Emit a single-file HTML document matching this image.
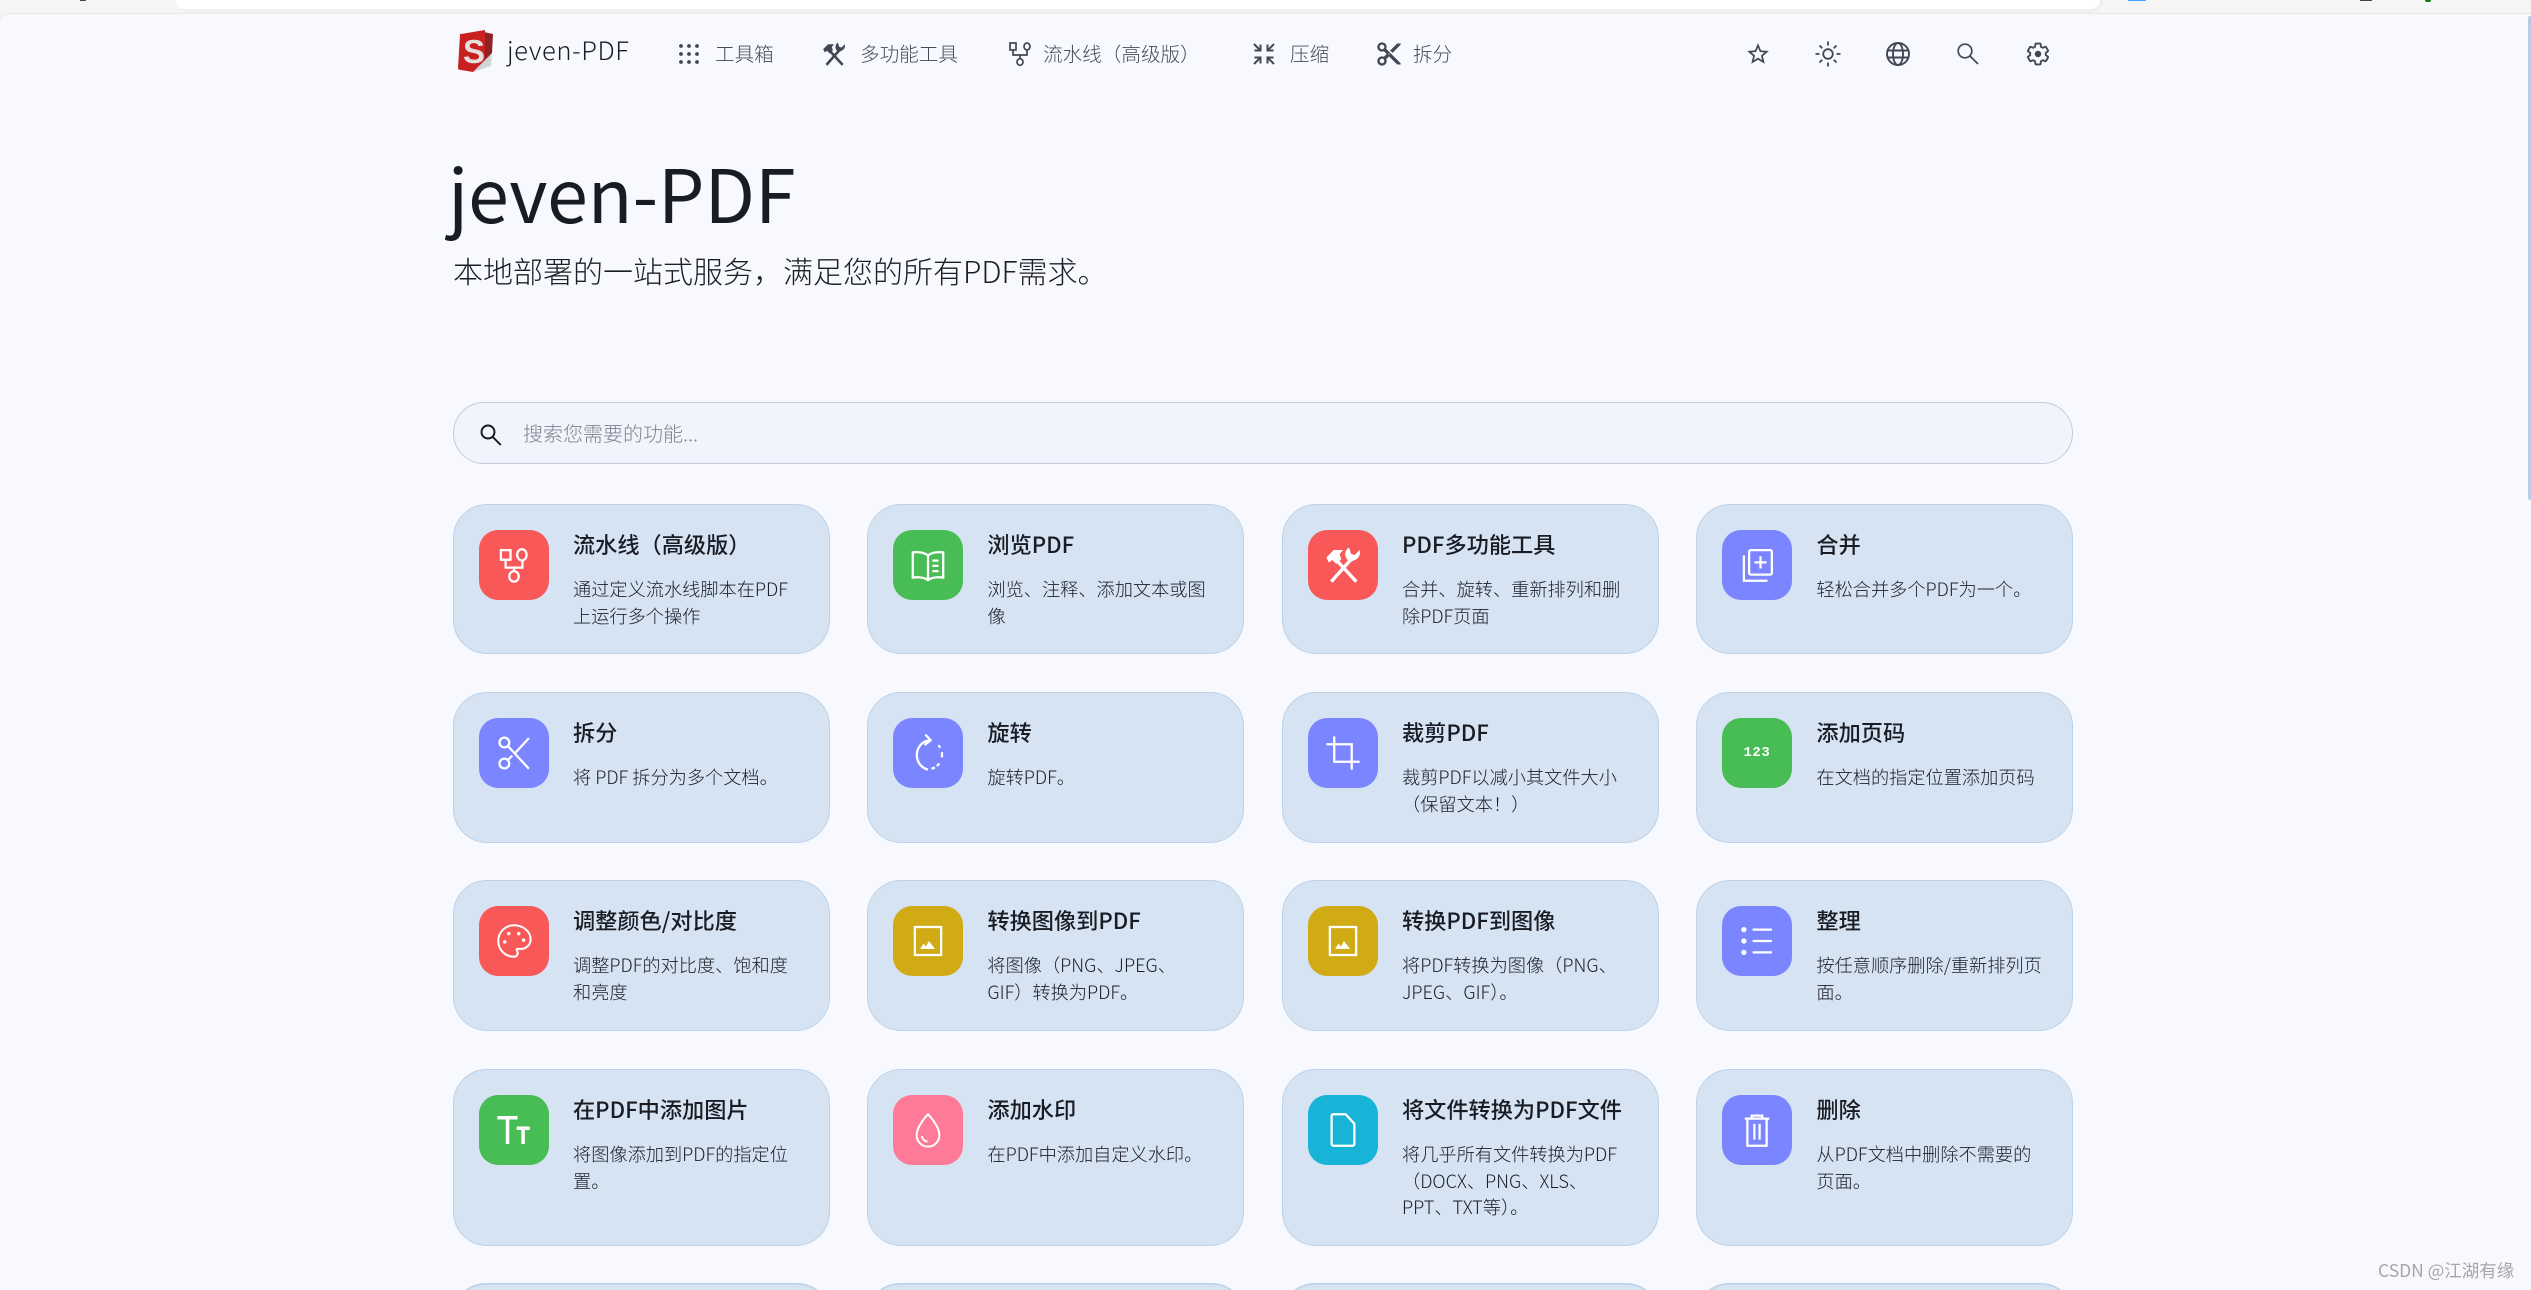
<!DOCTYPE html>
<html lang="zh-CN"><head><meta charset="utf-8"><title>jeven-PDF</title>
<style>
html,body{margin:0;padding:0;width:2531px;height:1290px;overflow:hidden;background:#f5f5f5}
body{position:relative;font-family:"Noto Sans CJK SC","Liberation Sans",sans-serif;color:#1a1c23}
#page{position:absolute;left:0;top:14px;width:2531px;height:1276px;background:#f8f9ff;border-top-left-radius:10px;box-shadow:0 -1px 1px #e6e6e6}
.abs{position:absolute}
.nt{position:absolute;top:38px;font-size:19.6px;line-height:30px;color:#454b57;white-space:nowrap;font-weight:300}
.ni{position:absolute;top:41px;width:26px;height:26px;fill:#414755;stroke:none}
.ns{fill:none;stroke:#414755;stroke-width:1.7}
.c{position:absolute;width:377px;box-sizing:border-box;background:#d5e3f3;border:1.5px solid #bdd2e8;border-radius:34px}
.i{position:absolute;left:24.5px;top:24.5px;width:70px;height:70px;border-radius:19px;display:flex;align-items:center;justify-content:center}
.i svg{width:42px;height:42px;fill:none;stroke:#fff;stroke-width:1.3}
.r{background:#f95858}.g{background:#49bd55}.b{background:#7b85ff}.y{background:#d1ab16}.p{background:#ff7a96}.k{background:#18b4d8}
.t{position:absolute;left:119px;top:23.5px;font-size:22.2px;line-height:30px;font-weight:500;white-space:nowrap;color:#1a1c23}
.d{position:absolute;left:119px;top:71px;font-size:18.2px;line-height:26.5px;white-space:nowrap;color:#1c1e25;font-weight:300}
</style></head><body>
<div class="abs" style="left:176px;top:0;width:1927px;height:12px;background:#efefef;border-radius:0 0 16px 16px"></div>
<div class="abs" style="left:175px;top:0;width:1925px;height:9px;background:#fff;border-radius:0 0 14px 14px"></div>
<div class="abs" style="left:80px;top:0;width:6px;height:1px;background:#444"></div>
<div class="abs" style="left:2128px;top:0;width:18px;height:1px;background:#3ea6ff"></div>
<div class="abs" style="left:2360px;top:0;width:12px;height:1px;background:#444"></div>
<div class="abs" style="left:2425px;top:0;width:6px;height:2px;background:#0a7d12;border-radius:0 0 3px 3px"></div>
<div id="page"></div>
<div class="abs" style="left:2528px;top:16px;width:3px;height:484px;background:#b8cde4;border-radius:2px 0 0 2px"></div>

<svg class="abs" style="left:458px;top:29px" width="36" height="44" viewBox="0 0 36 44">
<polygon points="26,3 35,5 34,24 26,33" fill="#8f2222"/>
<polygon points="15,43 34,24 33,37" fill="#cfd6d8"/>
<path d="M2 6 Q1 5 3 5 L27 1 V31 L15 43 L3 41 Q0 41 0 39 Z" fill="#c9211f"/>
<text x="5" y="34" font-family="Liberation Sans,sans-serif" font-weight="700" font-size="33" fill="#e6dfe0">S</text>
</svg>
<div class="abs" style="left:507px;top:29.5px;font-size:25.6px;line-height:40px;color:#1a1c23;white-space:nowrap;font-weight:300;letter-spacing:.6px">jeven-PDF</div>

<svg class="ni" style="left:676px" viewBox="0 0 26 26"><circle cx="5" cy="5" r="1.9"/><circle cx="13" cy="5" r="1.9"/><circle cx="21" cy="5" r="1.9"/><circle cx="5" cy="13" r="1.9"/><circle cx="13" cy="13" r="1.9"/><circle cx="21" cy="13" r="1.9"/><circle cx="5" cy="21" r="1.9"/><circle cx="13" cy="21" r="1.9"/><circle cx="21" cy="21" r="1.9"/></svg>
<div class="nt" style="left:715px">工具箱</div>
<svg class="ni" style="left:821px" viewBox="0 0 24 24"><path d="M8 9L20 22M16.500 9L5 22" style="stroke:#414755;stroke-width:2.400;fill:none"/><path d="M2 7.500L6.500 3H12L10 5.500 11 8.500 8 11.500 5.500 9 3.500 10.500z"/><path d="M15.500 1.500a4.800 4.800 0 0 0-1.500 6.500L16 10.500 19 9a4.800 4.800 0 0 0 3-6l-3 3-2.200-.6-.6-2.200z"/></svg>
<div class="nt" style="left:860px">多功能工具</div>
<svg class="ni" style="left:1007px" viewBox="0 0 26 26"><g class="ns"><rect x="3" y="2" width="6" height="7"/><ellipse cx="20" cy="5.500" rx="3" ry="3.500"/><path d="M6 9v5h14V9M13 14v4"/><ellipse cx="13" cy="21" rx="3" ry="3.300"/></g></svg>
<div class="nt" style="left:1043px">流水线（高级版）</div>
<svg class="ni" style="left:1251px" viewBox="0 0 26 26"><g class="ns" style="stroke-width:2"><path d="M3 3l5.500 5.500M9.500 3.500V9.500H3.500M23 3l-5.500 5.500M16.500 3.500V9.500h6M3 23l5.500-5.500M9.500 22.500V16.500H3.500M23 23l-5.500-5.500M16.500 22.500V16.500h6"/></g></svg>
<div class="nt" style="left:1290px">压缩</div>
<svg class="ni" style="left:1375px;width:28px;height:28px;top:40px" viewBox="0 0 24 24"><path d="M9.640 7.640c.23-.5.36-1.050.36-1.640 0-2.210-1.790-4-4-4S2 3.790 2 6s1.790 4 4 4c.59 0 1.140-.13 1.640-.36L10 12l-2.360 2.360C7.140 14.130 6.590 14 6 14c-2.210 0-4 1.790-4 4s1.790 4 4 4 4-1.790 4-4c0-.59-.13-1.140-.36-1.640L12 14l7 7h3v-1L9.640 7.640zM6 8c-1.100 0-2-.89-2-2s.9-2 2-2 2 .89 2 2-.9 2-2 2zm0 12c-1.100 0-2-.89-2-2s.9-2 2-2 2 .89 2 2-.9 2-2 2zm6-7.500c-.28 0-.5-.22-.5-.5s.22-.5.5-.5.5.22.5.5-.22.5-.5.5zM19 3l-6 6 2 2 7-7V3z"/></svg>
<div class="nt" style="left:1413px">拆分</div>

<svg class="ni" style="left:1745px" viewBox="0 0 24 24"><path d="M22 9.240l-7.190-.62L12 2 9.190 8.630 2 9.240l5.460 4.730L5.820 21 12 17.270 18.180 21l-1.630-7.030L22 9.240zM12 15.400l-3.760 2.270 1-4.280-3.320-2.880 4.380-.38L12 6.100l1.710 4.040 4.380.38-3.320 2.880 1 4.280L12 15.400z"/></svg>
<svg class="ni" style="left:1815px" viewBox="0 0 26 26"><g class="ns" style="stroke-width:1.800"><circle cx="13" cy="13" r="4.800"/><path d="M13 .5v4M13 21.500v4M.5 13h4M21.500 13h4M4.500 4.500l2.800 2.800M18.700 18.700l2.800 2.800M21.500 4.500l-2.800 2.800M7.300 18.700l-2.800 2.800"/></g></svg>
<svg class="ni" style="left:1885px" viewBox="0 0 26 26"><g class="ns" style="stroke-width:1.900"><circle cx="13" cy="13" r="11"/><ellipse cx="13" cy="13" rx="5" ry="11"/><path d="M2.500 9.500h21M2.500 16.500h21"/></g></svg>
<svg class="ni" style="left:1954px" viewBox="0 0 26 26"><g class="ns"><circle cx="11" cy="10" r="6.800"/><path d="M16 15l8 8"/></g></svg>
<svg class="ni" style="left:2025px" viewBox="0 0 24 24"><path class="ns" d="M19.140 12.940c.04-.3.06-.61.06-.94 0-.32-.02-.64-.07-.94l2.030-1.580c.18-.14.23-.41.12-.61l-1.920-3.320c-.12-.22-.37-.29-.59-.22l-2.390.96c-.5-.38-1.030-.7-1.620-.94l-.36-2.540c-.04-.24-.24-.41-.48-.41h-3.840c-.24 0-.43.17-.47.41l-.36 2.540c-.59.24-1.130.57-1.620.94l-2.390-.96c-.22-.08-.47 0-.59.22L2.740 8.870c-.12.21-.08.47.12.61l2.030 1.580c-.05.3-.09.63-.09.94s.02.64.07.94l-2.030 1.580c-.18.14-.23.41-.12.61l1.920 3.320c.12.22.37.29.59.22l2.390-.96c.5.38 1.030.7 1.620.94l.36 2.540c.05.24.24.41.48.41h3.840c.24 0 .44-.17.47-.41l.36-2.540c.59-.24 1.130-.56 1.620-.94l2.390.96c.22.08.47 0 .59-.22l1.920-3.320c.12-.22.07-.47-.12-.61l-2.010-1.580z"/><circle cx="12" cy="12" r="3"/></svg>

<div class="abs" style="left:448px;top:137px;font-size:73.4px;line-height:110px;color:#1a1c23;white-space:nowrap;font-weight:400">jeven-PDF</div>
<div class="abs" style="left:453px;top:248px;font-size:30px;line-height:44px;color:#1c1e25;white-space:nowrap;font-weight:300">本地部署的一站式服务，满足您的所有PDF需求。</div>

<div class="abs" style="left:453px;top:402px;width:1620px;height:62px;box-sizing:border-box;background:#f1f4fd;border:1.5px solid #c3cbde;border-radius:31px"></div>
<svg class="abs" style="left:477px;top:422px" width="26" height="26" viewBox="0 0 26 26"><g fill="none" stroke="#14161c" stroke-width="1.900"><circle cx="11" cy="10" r="6.500"/><path d="M15.800 15l8 8"/></g></svg>
<div class="abs" style="left:523px;top:418px;font-size:20px;line-height:30px;color:#7d828c;white-space:nowrap;font-weight:300">搜索您需要的功能...</div>

<!-- row 1 -->
<div class="c" style="left:453px;top:504px;height:150px"><div class="i r"><svg viewBox="0 0 24 24"><rect x="4.500" y="3.500" width="5.500" height="5.500"/><ellipse cx="16.500" cy="6.200" rx="2.700" ry="3.200"/><path d="M7.200 9v4.500h9.600V9.500M12 13.500v2.500"/><ellipse cx="12" cy="18.500" rx="2.700" ry="3"/></svg></div><div class="t">流水线（高级版）</div><div class="d">通过定义流水线脚本在PDF<br>上运行多个操作</div></div>
<div class="c" style="left:867.400px;top:504px;height:150px"><div class="i g"><svg viewBox="0 0 24 24"><path d="M12 6.500C10 5 7 4.300 3.300 4.800v14.400c3.700-.5 6.700 0 8.700 1.500 2-1.500 5-2 8.700-1.500V4.800C17 4.300 14 5 12 6.500zM12 6.500v14M14.500 9.500h3.500M14.500 12.500h3.500M14.500 15.500h3.500"/></svg></div><div class="t">浏览PDF</div><div class="d">浏览、注释、添加文本或图<br>像</div></div>
<div class="c" style="left:1282px;top:504px;height:150px"><div class="i r"><svg viewBox="0 0 24 24" style="stroke:none;width:40px;height:40px"><path d="M8 9L20 22M16.500 9L5 22" style="stroke:#fff;stroke-width:2;fill:none"/><path d="M2 7.500L6.500 3H12L10 5.500 11 8.500 8 11.500 5.500 9 3.500 10.500z" style="fill:#fff"/><path d="M15.500 1.500a4.800 4.800 0 0 0-1.500 6.500L16 10.500 19 9a4.800 4.800 0 0 0 3-6l-3 3-2.200-.6-.6-2.200z" style="fill:#fff"/></svg></div><div class="t">PDF多功能工具</div><div class="d">合并、旋转、重新排列和删<br>除PDF页面</div></div>
<div class="c" style="left:1696.400px;top:504px;height:150px"><div class="i b"><svg viewBox="0 0 24 24"><path d="M4.500 6.500V21H18"/><rect x="7.500" y="3.500" width="13" height="14" rx="1"/><path d="M14 7v7M10.500 10.500h7"/></svg></div><div class="t">合并</div><div class="d">轻松合并多个PDF为一个。</div></div>
<!-- row 2 -->
<div class="c" style="left:453px;top:692px;height:151px"><div class="i b"><svg viewBox="0 0 24 24"><circle cx="6.500" cy="6" r="2.800"/><circle cx="6.500" cy="18" r="2.800"/><path d="M8.500 8l12 13M20.500 3.500L12 12.800M8.500 16l2.500-2.500"/></svg></div><div class="t">拆分</div><div class="d">将 PDF 拆分为多个文档。</div></div>
<div class="c" style="left:867.400px;top:692px;height:151px"><div class="i b"><svg viewBox="0 0 24 24"><path d="M13 4.700a8 8.500 0 0 0-1 16.800M10.500 1.500L13.500 4.700l-3.500 2.800M18 7.500l1 1.500M20 11.500v3M18.500 18l-1.500 1.500M14 21l2-.7"/></svg></div><div class="t">旋转</div><div class="d">旋转PDF。</div></div>
<div class="c" style="left:1282px;top:692px;height:151px"><div class="i b"><svg viewBox="0 0 24 24"><path d="M7 2.500V17h14.500M2.500 7H17v14.500"/></svg></div><div class="t">裁剪PDF</div><div class="d">裁剪PDF以减小其文件大小<br>（保留文本！）</div></div>
<div class="c" style="left:1696.400px;top:692px;height:151px"><div class="i g"><span style="font:700 14px 'Liberation Mono',monospace;color:#fff;letter-spacing:.5px">123</span></div><div class="t">添加页码</div><div class="d">在文档的指定位置添加页码</div></div>
<!-- row 3 -->
<div class="c" style="left:453px;top:880px;height:151px"><div class="i r"><svg viewBox="0 0 24 24" style="stroke-width:1.150"><path d="M12 3C7 3 3 7 3 12s4 9 9 9c1.200 0 2.200-1 2.200-2.200 0-.6-.2-1.100-.6-1.500-.1-.1-.1-.2-.1-.3 0-.3.2-.5.5-.5H16c3 0 5.500-2.400 5.500-5.500C21.500 6.600 17.200 3 12 3z"/><g style="fill:#fff;stroke:none"><circle cx="6.700" cy="12.500" r="1"/><circle cx="9" cy="7.800" r="1"/><circle cx="14.700" cy="7.800" r="1"/><circle cx="17.500" cy="11.500" r="1"/></g></svg></div><div class="t">调整颜色/对比度</div><div class="d">调整PDF的对比度、饱和度<br>和亮度</div></div>
<div class="c" style="left:867.400px;top:880px;height:151px"><div class="i y"><svg viewBox="0 0 24 24"><rect x="4.500" y="4" width="15" height="16"/><path d="M7.500 16.500l2-3 1.300 1.800 1.700-3.300 3.500 4.500z" style="fill:#fff;stroke:none"/></svg></div><div class="t">转换图像到PDF</div><div class="d">将图像（PNG、JPEG、<br>GIF）转换为PDF。</div></div>
<div class="c" style="left:1282px;top:880px;height:151px"><div class="i y"><svg viewBox="0 0 24 24"><rect x="4.500" y="4" width="15" height="16"/><path d="M7.500 16.500l2-3 1.300 1.800 1.700-3.300 3.500 4.500z" style="fill:#fff;stroke:none"/></svg></div><div class="t">转换PDF到图像</div><div class="d">将PDF转换为图像（PNG、<br>JPEG、GIF）。</div></div>
<div class="c" style="left:1696.400px;top:880px;height:151px"><div class="i b"><svg viewBox="0 0 24 24" style="stroke-width:1.300"><path d="M9.500 5.500H20.500M9.500 12H20.500M9.500 18.500H20.500"/><g style="fill:#fff;stroke:none"><circle cx="4.500" cy="5.500" r="1.500"/><circle cx="4.500" cy="12" r="1.500"/><circle cx="4.500" cy="18.500" r="1.500"/></g></svg></div><div class="t">整理</div><div class="d">按任意顺序删除/重新排列页<br>面。</div></div>
<!-- row 4 -->
<div class="c" style="left:453px;top:1069px;height:177px"><div class="i g"><svg viewBox="0 0 24 24" style="stroke-width:2"><path d="M2.500 5H14M8.300 5V20M13.500 11H21M17.200 11V20"/></svg></div><div class="t">在PDF中添加图片</div><div class="d">将图像添加到PDF的指定位<br>置。</div></div>
<div class="c" style="left:867.400px;top:1069px;height:177px"><div class="i p"><svg viewBox="0 0 24 24" style="stroke-width:1.150"><path d="M12 3C12 3 5.500 9.500 5.500 15a6.500 6.500 0 0 0 13 0C18.500 9.500 12 3 12 3zM8.500 15.500c.3 1.800 1.500 2.900 3.200 3.100"/></svg></div><div class="t">添加水印</div><div class="d">在PDF中添加自定义水印。</div></div>
<div class="c" style="left:1282px;top:1069px;height:177px"><div class="i k"><svg viewBox="0 0 24 24" style="stroke-width:1.300"><path d="M6.500 3h7L18.500 8.500V20a1 1 0 0 1-1 1h-11a1 1 0 0 1-1-1V4a1 1 0 0 1 1-1z"/></svg></div><div class="t">将文件转换为PDF文件</div><div class="d">将几乎所有文件转换为PDF<br>（DOCX、PNG、XLS、<br>PPT、TXT等）。</div></div>
<div class="c" style="left:1696.400px;top:1069px;height:177px"><div class="i b"><svg viewBox="0 0 24 24" style="stroke-width:1.300"><path d="M5 5.500h14M9 5V3.800h6V5M6.500 5.500V21h11V5.500M10.500 8.500v9M13.500 8.500v9"/></svg></div><div class="t">删除</div><div class="d">从PDF文档中删除不需要的<br>页面。</div></div>
<!-- row 5: only the top edge of each card is inside the frame -->
<svg class="abs" style="left:453px;top:1283px" width="1621" height="7" viewBox="0 0 1621 7">
<g fill="#d5e3f3" stroke="none">
<path d="M13.300 7A34 34 0 0 1 34 .75H343A34 34 0 0 1 363.700 7Z"/>
<path transform="translate(414.400,0)" d="M13.300 7A34 34 0 0 1 34 .75H343A34 34 0 0 1 363.700 7Z"/>
<path transform="translate(829,0)" d="M13.300 7A34 34 0 0 1 34 .75H343A34 34 0 0 1 363.700 7Z"/>
<path transform="translate(1243.400,0)" d="M13.300 7A34 34 0 0 1 34 .75H343A34 34 0 0 1 363.700 7Z"/>
</g>
<g fill="none" stroke="#bdd2e8" stroke-width="1.500">
<path d="M13.300 7A34 34 0 0 1 34 .75H343A34 34 0 0 1 363.700 7"/>
<path transform="translate(414.400,0)" d="M13.300 7A34 34 0 0 1 34 .75H343A34 34 0 0 1 363.700 7"/>
<path transform="translate(829,0)" d="M13.300 7A34 34 0 0 1 34 .75H343A34 34 0 0 1 363.700 7"/>
<path transform="translate(1243.400,0)" d="M13.300 7A34 34 0 0 1 34 .75H343A34 34 0 0 1 363.700 7"/>
</g>
</svg>

<div class="abs" style="left:2378px;top:1259px;font-size:17.500px;line-height:24px;color:#a6a6a6;white-space:nowrap">CSDN @江湖有缘</div>
</body></html>
